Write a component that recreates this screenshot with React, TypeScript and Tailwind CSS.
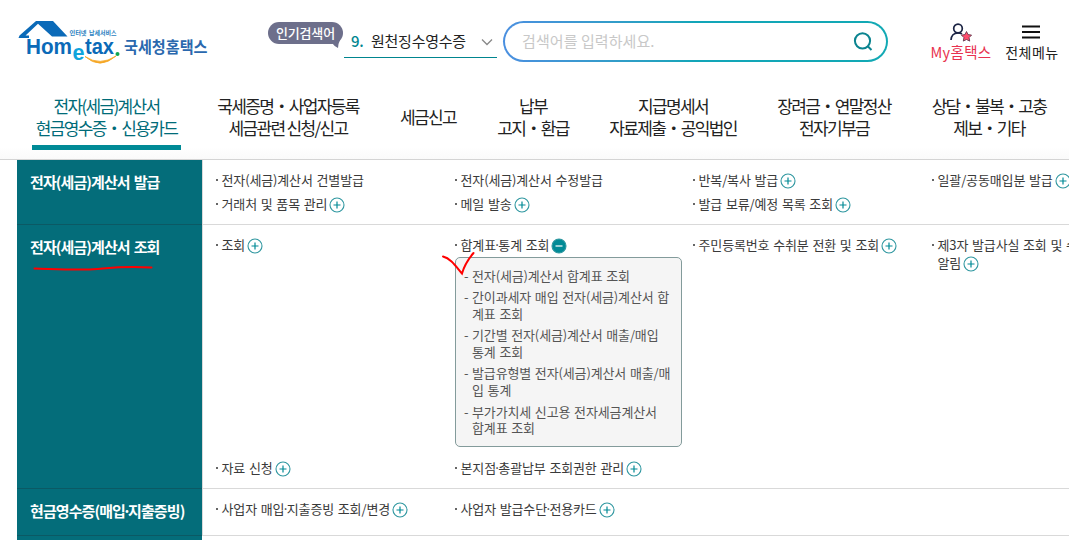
import React from 'react';
import type { FC } from 'react';

type Mark = 'plus' | 'minus';

interface MenuLink {
  label: string;
  // second line, when the label wraps
  label2?: string;
  mark?: Mark;
  children?: string[][];
}

interface MenuSection {
  title: string;
  height: string;
  rows: (MenuLink | null)[][];
}

const NAV: { lines: string[]; active?: boolean }[] = [
  { lines: ['전자(세금)계산서', '현금영수증・신용카드'], active: true },
  { lines: ['국세증명・사업자등록', '세금관련 신청/신고'] },
  { lines: ['세금신고'] },
  { lines: ['납부', '고지・환급'] },
  { lines: ['지급명세서', '자료제출・공익법인'] },
  { lines: ['장려금・연말정산', '전자기부금'] },
  { lines: ['상담・불복・고충', '제보・기타'] },
];

const SECTIONS: MenuSection[] = [
  {
    title: '전자(세금)계산서 발급',
    height: 'h-[65px]',
    rows: [
      [
        { label: '전자(세금)계산서 건별발급' },
        { label: '전자(세금)계산서 수정발급' },
        { label: '반복/복사 발급', mark: 'plus' },
        { label: '일괄/공동매입분 발급', mark: 'plus' },
      ],
      [
        { label: '거래처 및 품목 관리', mark: 'plus' },
        { label: '메일 발송', mark: 'plus' },
        { label: '발급 보류/예정 목록 조회', mark: 'plus' },
        null,
      ],
    ],
  },
  {
    title: '전자(세금)계산서 조회',
    height: 'h-[264px]',
    rows: [
      [
        { label: '조회', mark: 'plus' },
        {
          label: '합계표·통계 조회',
          mark: 'minus',
          children: [
            ['전자(세금)계산서 합계표 조회'],
            ['간이과세자 매입 전자(세금)계산서 합', '계표 조회'],
            ['기간별 전자(세금)계산서 매출/매입', '통계 조회'],
            ['발급유형별 전자(세금)계산서 매출/매', '입 통계'],
            ['부가가치세 신고용 전자세금계산서', '합계표 조회'],
          ],
        },
        { label: '주민등록번호 수취분 전환 및 조회', mark: 'plus' },
        { label: '제3자 발급사실 조회 및 수', label2: '알림', mark: 'plus' },
      ],
      [
        { label: '자료 신청', mark: 'plus' },
        { label: '본지점·총괄납부 조회권한 관리', mark: 'plus' },
        null,
        null,
      ],
    ],
  },
  {
    title: '현금영수증(매입·지출증빙)',
    height: 'h-[47px]',
    rows: [
      [
        { label: '사업자 매입·지출증빙 조회/변경', mark: 'plus' },
        { label: '사업자 발급수단·전용카드', mark: 'plus' },
        null,
        null,
      ],
    ],
  },
];

// the middle dot is set tight between its neighbours
const Label: FC<{ text: string }> = ({ text }) => (
  <span>
    {text.split('·').map((part, i) => (
      <React.Fragment key={i}>
        {i > 0 && <span className="-mx-[2.400px]">·</span>}
        {part}
      </React.Fragment>
    ))}
  </span>
);

const ToggleMark: FC<{ mark: Mark }> = ({ mark }) => (
  <svg className="ml-[2px] mt-[3px] shrink-0" width="16" height="16" viewBox="0 0 16 16">
    <circle cx="8" cy="8" r="7" fill={mark === 'minus' ? '#008a96' : '#fff'} stroke="#2f97a0" strokeWidth="1.100" />
    <path
      d={mark === 'minus' ? 'M4.500 8h7' : 'M4.500 8h7M8 4.500v7'}
      stroke={mark === 'minus' ? '#fff' : '#008a96'}
      strokeWidth="1.200"
    />
  </svg>
);

const Logo: FC = () => (
  <svg width="192" height="50" viewBox="18 18 192 50" fontFamily="'Liberation Sans', sans-serif" fontWeight="700">
    <path d="M36 21h17l14.500 15.500H52L38 23.800 25.500 35.500H29V38H18.500l1-2.500z" fill="#0b6ab8" />
    <text x="26" y="54" fontSize="22.500" fill="#0b6ab8" textLength="46" lengthAdjust="spacingAndGlyphs">Hom</text>
    <text x="72.500" y="60" fontSize="22" fill="#10a5dc" textLength="12" lengthAdjust="spacingAndGlyphs">e</text>
    <text x="85" y="54" fontSize="22.500" fill="#0b6ab8" textLength="29" lengthAdjust="spacingAndGlyphs">tax</text>
    <circle cx="117.500" cy="54" r="2" fill="#12a650" />
    <path d="M85 56.500q15 13.500 31-.5q-16 10.500-31 .5" fill="#f5a623" stroke="#f5a623" strokeWidth="0.800" />
    <g fontFamily="'Noto Sans CJK KR', sans-serif">
      <text x="69.500" y="35" fontSize="6.200" fill="#2b7fc0" textLength="17">인터넷</text>
      <text x="89" y="35" fontSize="6.200" fill="#2b7fc0" textLength="27.500" lengthAdjust="spacingAndGlyphs">납세서비스</text>
      <text x="124" y="52.500" fontSize="15.500" fill="#2a68ae" textLength="83.500" lengthAdjust="spacingAndGlyphs">국세청홈택스</text>
    </g>
  </svg>
);

const Header: FC = () => (
  <header className="flex h-20 items-start">
    <div className="ml-[18px] mt-[18px] w-[192px]">
      <Logo />
    </div>
    <div className="relative ml-[58px] mt-[22px] flex h-[22px] w-[75px] items-center justify-center rounded-full bg-[#6d6f8b] pb-[1px] text-[13px] font-medium tracking-[-0.200px] text-white">
      인기검색어
      <svg className="absolute right-[2px] top-[18px]" width="12" height="8" viewBox="0 0 12 8">
        <path d="M0 3 11 0Q9 4 9 8 5 6 3 3z" fill="#6d6f8b" />
      </svg>
    </div>
    <div className="ml-[1px] mt-[26px] flex h-8 w-[153px] items-center border-b border-[#00858f] pl-[7px] text-[15px] tracking-[-0.250px]">
      <span className="w-[20px] font-medium text-[#00858f]">9.</span>
      <span className="text-[#222]">원천징수영수증</span>
      <svg className="ml-auto mr-[4px]" width="12" height="8" viewBox="0 0 12 8">
        <path d="M1 1.500 6 6.500 11 1.500" fill="none" stroke="#888" strokeWidth="1.300" />
      </svg>
    </div>
    <div className="ml-[6px] mt-[21px] h-[41px] w-[385px] rounded-full bg-gradient-to-r from-[#4a8fe0] via-[#12a5b8] via-50% to-[#12a9b4] p-[2px]">
      <div className="flex h-full items-center rounded-full bg-white pl-[17px] pr-[13px] text-[15px] tracking-[0.080px] text-[#c8c8c8]">
        검색어를 입력하세요.
        <svg className="ml-auto" width="20" height="20" viewBox="0 0 20 20" fill="none" stroke="#0b8490" strokeWidth="2">
          <circle cx="9.500" cy="8.800" r="7.600" />
          <path d="m14.500 14 4 4" />
        </svg>
      </div>
    </div>
    <div className="ml-[42px] mt-[22px] flex w-[62px] flex-col items-center text-[14px] text-[#e8324f]">
      <svg width="24" height="20" viewBox="0 0 24 20">
        <circle cx="9" cy="6.500" r="4.300" fill="none" stroke="#1c2444" strokeWidth="1.700" />
        <path d="M2 18q.5-7 7-7 2.500 0 4 1" fill="none" stroke="#1c2444" strokeWidth="1.700" />
        <path d="m17.500 9.500 1.600 3.100 3.500.5-2.500 2.500.6 3.500-3.200-1.600-3.200 1.600.6-3.500-2.500-2.500 3.500-.5z" fill="#ff4d6d" stroke="#553048" strokeWidth="0.800" />
      </svg>
      <span className="whitespace-nowrap text-[14.500px] leading-[20px] tracking-[0.350px]">My홈택스</span>
    </div>
    <div className="ml-[13px] mt-[22px] flex w-[54px] flex-col items-center text-[14px] text-[#222]">
      <svg width="18" height="20" viewBox="0 0 18 20" className="mr-[2px]">
        <path d="M0 4.500h18M0 10h18M0 15.500h18" stroke="#111" strokeWidth="2" />
      </svg>
      <span className="whitespace-nowrap leading-[20px] tracking-[0.500px]">전체메뉴</span>
    </div>
  </header>
);

const MenuItem: FC<{ link: MenuLink }> = ({ link }) => (
  <li className="flex">
    <span className="mr-[3.500px] mt-[9px] h-[2px] w-[2px] shrink-0 bg-[#666]" />
    <div className="whitespace-nowrap">
      <div className={`flex items-start ${link.label2 ? 'h-[18px]' : 'h-5'}`}>
        <Label text={link.label} />
        {link.mark && !link.label2 && <ToggleMark mark={link.mark} />}
      </div>
      {link.label2 && (
        <div className="flex">
          {link.label2}
          {link.mark && <ToggleMark mark={link.mark} />}
        </div>
      )}
      {link.children && (
        <ul className="-ml-[5.500px] mb-[7px] mt-[2px] flex h-[190px] w-[227px] flex-col gap-[5px] rounded-[5px] border border-[#839b9b] bg-[#f5f5f5] pl-[8px] pt-[9.500px] leading-[16.600px] tracking-[-0.140px] text-[#555]">
          {link.children.map(lines => (
            <li key={lines[0]} className="flex">
              <span className="w-[8px] shrink-0">-</span>
              <span>
                {lines.map(line => <span key={line} className="block">{line}</span>)}
              </span>
            </li>
          ))}
        </ul>
      )}
    </div>
  </li>
);

const App: FC = () => (
  <div className="relative h-[540px] w-[1069px] overflow-hidden bg-white font-['Noto_Sans_CJK_KR',sans-serif]">
    <Header />

    <nav className="grid h-20 grid-cols-[179px_184px_96px_114px_166px_156px_154px] border-b border-[#d4d4d4] bg-gradient-to-b from-white from-85% to-[#fafafa] pl-[17px] text-[17px] leading-[22px] tracking-[-1.640px] text-[#222]">
      {NAV.map(item => (
        <div key={item.lines[0]} className={`flex flex-col items-center ${item.active ? 'text-[#006b78]' : ''}`}>
          <div className="mt-[14px] flex h-[46px] flex-col justify-center whitespace-nowrap text-center">
            {item.lines.map(line => <div key={line}>{line}</div>)}
          </div>
          {item.active && <div className="mt-[5px] h-[5px] w-[149px] bg-[#008a96]" />}
        </div>
      ))}
    </nav>

    <main>
      {SECTIONS.map(section => (
        <section key={section.title} className={`flex pl-[17px] ${section.height}`}>
          <h2 className="w-[185px] shrink-0 whitespace-nowrap border-b border-[#0b5964] bg-[#046d7a] pl-[13px] pt-[12px] text-[15px] font-bold leading-[20px] tracking-[-0.920px] text-white [word-spacing:1.500px]">
            <Label text={section.title} />
          </h2>
          <div className="min-w-0 flex-1 border-b border-l border-[#d9d9d9] pl-[13px] pt-[10px]">
            {section.rows.map((row, i) => (
              <ul key={i} className="mb-1 grid grid-cols-[239px_238px_239px_200px] text-[13px] leading-[20px] tracking-[-0.140px] text-[#3a3a3a] [word-spacing:1px]">
                {row.map((link, j) => (link ? <MenuItem key={link.label} link={link} /> : <li key={j} />))}
              </ul>
            ))}
          </div>
        </section>
      ))}
      <div className="flex pl-[17px]">
        <div className="h-[10px] w-[185px] bg-[#046d7a]" />
      </div>
    </main>

    {/* hand-drawn red marks */}
    <svg className="pointer-events-none absolute left-0 top-0" width="500" height="280" fill="none" stroke="#f00" strokeLinecap="round">
      <path d="M34.500 268.500c18 .5 36 1.500 52 1 18-.5 30-4 65-2" strokeWidth="2" />
      <path d="M443 256.500c8 2 13 10 19 17 2-7 6-14 11.500-20.500" strokeWidth="2" />
    </svg>
  </div>
);

export default App;
